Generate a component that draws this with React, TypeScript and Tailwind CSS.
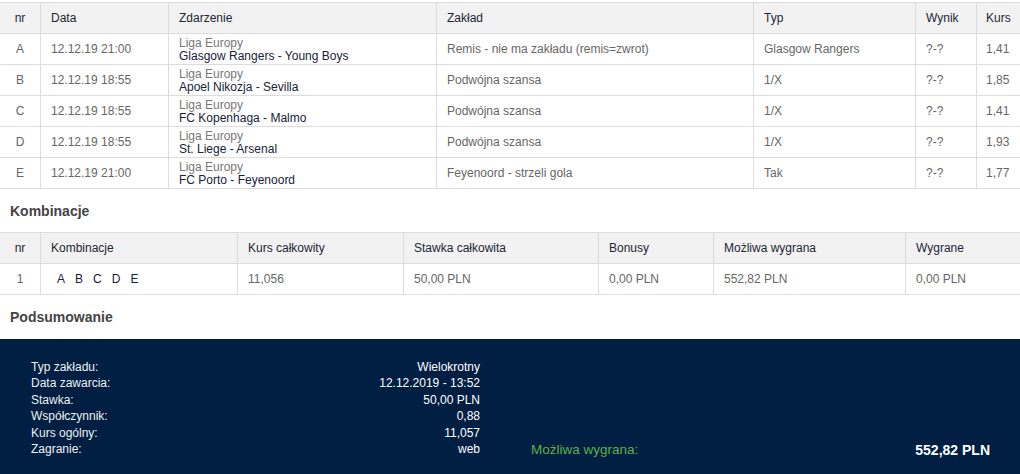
import React from "react";

const rows = [
  { nr: "A", date: "12.12.19 21:00", league: "Liga Europy", event: "Glasgow Rangers - Young Boys", bet: "Remis - nie ma zakładu (remis=zwrot)", typ: "Glasgow Rangers", wynik: "?-?", kurs: "1,41" },
  { nr: "B", date: "12.12.19 18:55", league: "Liga Europy", event: "Apoel Nikozja - Sevilla", bet: "Podwójna szansa", typ: "1/X", wynik: "?-?", kurs: "1,85" },
  { nr: "C", date: "12.12.19 18:55", league: "Liga Europy", event: "FC Kopenhaga - Malmo", bet: "Podwójna szansa", typ: "1/X", wynik: "?-?", kurs: "1,41" },
  { nr: "D", date: "12.12.19 18:55", league: "Liga Europy", event: "St. Liege - Arsenal", bet: "Podwójna szansa", typ: "1/X", wynik: "?-?", kurs: "1,93" },
  { nr: "E", date: "12.12.19 21:00", league: "Liga Europy", event: "FC Porto - Feyenoord", bet: "Feyenoord - strzeli gola", typ: "Tak", wynik: "?-?", kurs: "1,77" },
];

const summary = [
  ["Typ zakładu:", "Wielokrotny"],
  ["Data zawarcia:", "12.12.2019 - 13:52"],
  ["Stawka:", "50,00 PLN"],
  ["Współczynnik:", "0,88"],
  ["Kurs ogólny:", "11,057"],
  ["Zagranie:", "web"],
];

const cell = "h-[31px] border-b border-r border-[#dcdcdc] flex items-center px-[10px] overflow-hidden whitespace-nowrap";
const cellLast = "h-[31px] border-b border-[#dcdcdc] flex items-center px-[9px] overflow-hidden whitespace-nowrap";

export default function App() {
  return (
    <div className="w-[1020px] h-[474px] overflow-hidden bg-white text-[12px] leading-[14px]" style={{ fontFamily: '"Liberation Sans", Arial, sans-serif' }}>
      {/* Top table */}
      <div className="mt-[2px] border-t border-[#dcdcdc] grid grid-cols-[41px_128px_268px_317px_162px_61px_43px]">
        <div className={`${cell} justify-center bg-[#f2f2f2] text-[#222633]`}>nr</div>
        <div className={`${cell} bg-[#f2f2f2] text-[#222633]`}>Data</div>
        <div className={`${cell} bg-[#f2f2f2] text-[#222633]`}>Zdarzenie</div>
        <div className={`${cell} bg-[#f2f2f2] text-[#222633]`}>Zakład</div>
        <div className={`${cell} bg-[#f2f2f2] text-[#222633]`}>Typ</div>
        <div className={`${cell} bg-[#f2f2f2] text-[#222633]`}>Wynik</div>
        <div className={`${cellLast} bg-[#f2f2f2] text-[#222633]`}>Kurs</div>
        {rows.map((r) => (
          <React.Fragment key={r.nr}>
            <div className={`${cell} justify-center text-[#666]`}>{r.nr}</div>
            <div className={`${cell} text-[#666]`}>{r.date}</div>
            <div className={`${cell} flex-col !items-start justify-center pt-[2px]`}>
              <span className="text-[#777] leading-[13px]">{r.league}</span>
              <span className="text-[#17213d] leading-[13px]">{r.event}</span>
            </div>
            <div className={`${cell} text-[#666]`}>{r.bet}</div>
            <div className={`${cell} text-[#666]`}>{r.typ}</div>
            <div className={`${cell} text-[#666]`}>{r.wynik}</div>
            <div className={`${cellLast} text-[#666]`}>{r.kurs}</div>
          </React.Fragment>
        ))}
      </div>

      {/* Kombinacje */}
      <div className="h-[43px] flex items-center px-[10px] text-[14px] font-bold text-[#444]">Kombinacje</div>
      <div className="border-t border-[#dcdcdc] grid grid-cols-[41px_197px_166px_195px_115px_192px_114px]">
        <div className={`${cell} justify-center bg-[#f2f2f2] text-[#222633]`}>nr</div>
        <div className={`${cell} bg-[#f2f2f2] text-[#222633]`}>Kombinacje</div>
        <div className={`${cell} bg-[#f2f2f2] text-[#222633]`}>Kurs całkowity</div>
        <div className={`${cell} bg-[#f2f2f2] text-[#222633]`}>Stawka całkowita</div>
        <div className={`${cell} bg-[#f2f2f2] text-[#222633]`}>Bonusy</div>
        <div className={`${cell} bg-[#f2f2f2] text-[#222633]`}>Możliwa wygrana</div>
        <div className={`${cellLast} !px-[10px] bg-[#f2f2f2] text-[#222633]`}>Wygrane</div>

        <div className={`${cell} justify-center text-[#666]`}>1</div>
        <div className={`${cell} text-[#17213d]`}>
          <span className="flex pl-[1px]">
            {["A", "B", "C", "D", "E"].map((l) => (
              <span key={l} className="px-[5px]">{l}</span>
            ))}
          </span>
        </div>
        <div className={`${cell} text-[#666]`}>11,056</div>
        <div className={`${cell} text-[#666]`}>50,00 PLN</div>
        <div className={`${cell} text-[#666]`}>0,00 PLN</div>
        <div className={`${cell} text-[#666]`}>552,82 PLN</div>
        <div className={`${cellLast} !px-[10px] text-[#666]`}>0,00 PLN</div>
      </div>

      {/* Podsumowanie */}
      <div className="h-[44px] flex items-center px-[10px] text-[14px] font-bold text-[#444]">Podsumowanie</div>
      <div className="bg-[#001f42] h-[140px] flex pl-[31px] pt-[20px] pr-[30px]">
        <div className="w-[449px] flex flex-col text-[#f0f0f0] leading-[16.4px] self-start">
          {summary.map(([k, v]) => (
            <div key={k} className="flex justify-between">
              <span>{k}</span>
              <span className="text-white">{v}</span>
            </div>
          ))}
        </div>
        <div className="flex-1 flex justify-between items-start pl-[51px] pt-[82px]">
          <span className="text-[13.5px] leading-[18px] text-[#5fb04a]">Możliwa wygrana:</span>
          <span className="text-[14px] leading-[18px] font-bold text-white">552,82 PLN</span>
        </div>
      </div>
    </div>
  );
}
